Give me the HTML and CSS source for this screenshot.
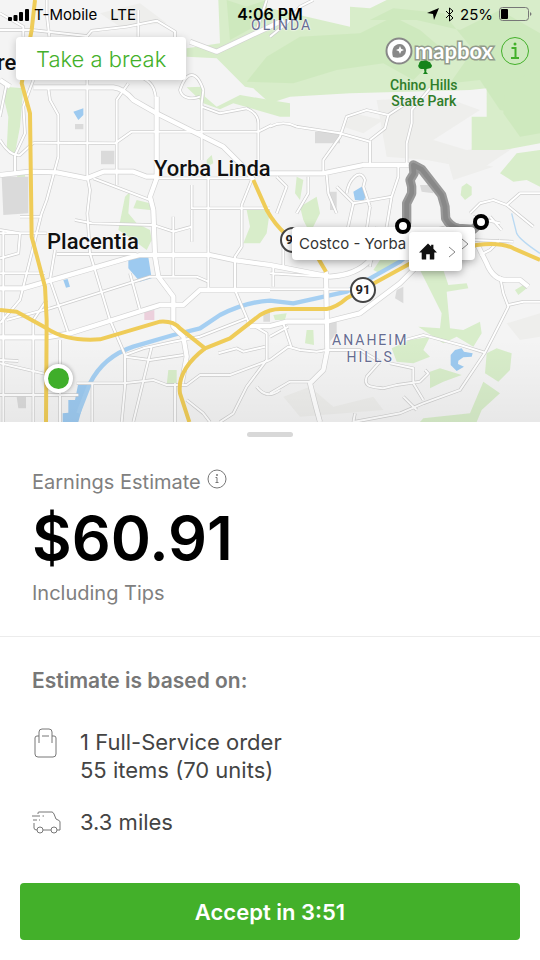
FILE: index.html
```html
<!DOCTYPE html>
<html lang="en">
<head>
  <meta charset="UTF-8">
  <meta name="viewport" content="width=device-width, initial-scale=1.0">
  <title>Earnings Estimate</title>
  <link rel="stylesheet" href="styles.css">
</head>
<body>
  <section class="map">
    <svg class="map-canvas" viewBox="0 0 1620 1266" preserveAspectRatio="xMidYMin slice" aria-hidden="true">
      <defs>
        <linearGradient id="fade" x1="0" y1="0" x2="0" y2="1">
          <stop offset="0" stop-color="#000" stop-opacity="0"/>
          <stop offset="1" stop-color="#000" stop-opacity=".05"/>
        </linearGradient>
        <g id="minor">
          <path d="M0 90H95L260 108M260 110L275 92L380 80L470 62L525 95V120M140 0V40L148 110M415 30V110M0 40L70 80V110"/>
          <path d="M145 265L150 300L175 345V470L140 600L125 640L90 780L60 900L0 970M262 240V530M385 250L350 300V555"/>
          <path d="M430 235C460 250 470 270 470 340M100 428L345 430L395 395H775L815 375"/>
          <path d="M0 420Q30 470 60 465L100 428M45 465V515M100 240L70 320L75 400L45 465M20 250L0 350"/>
          <path d="M605 480V310L610 270C590 210 560 210 540 270C545 295 575 300 600 290M605 320L660 340L740 325Q775 340 775 370V480"/>
          <path d="M280 535L450 600M262 530L270 570L262 640L270 760L330 960L375 1065V1160L365 1266"/>
          <path d="M470 535H760M575 555V625H810M625 530V865M755 540L725 615V740L705 770V870L745 965"/>
          <path d="M225 660L275 670L460 675L520 695L575 680V725M575 630V680M520 650V830"/>
          <path d="M170 762H410M165 750L150 840L205 1000M20 960L150 925L450 830H590L625 845M390 820L420 930"/>
          <path d="M375 1065L430 1045L520 1025L600 1010L740 955M455 1040L400 1266M375 1070L450 1080L550 1065"/>
          <path d="M230 1150H370L460 1140L500 1155H560L600 1125L690 1125L810 1080"/>
          <path d="M0 1090L150 1125M0 1080L55 1083M0 1185H235M277 1150V1266M525 1150V1266M180 1020V1100M180 1170V1266"/>
          <path d="M10 690V1266M0 820H135M0 690L60 700L55 760L0 775M60 650H120M0 700H140"/>
          <path d="M140 900L100 960V1266M655 1060L710 1045L730 1055L795 1040M740 965L800 1000V1080L740 1160L700 1240L660 1266"/>
          <path d="M770 1160Q800 1200 840 1170M560 1200L610 1240L630 1266M800 0L770 90"/>
          <path d="M810 380Q850 360 890 380L1020 400L1110 425V495M970 525V480L1020 410L1040 350L1100 330L1165 345L1155 385L1110 420"/>
          <path d="M1290 265L1235 330V370L1220 430V495M1165 345L1250 290"/>
          <path d="M830 640L860 560L830 530M890 640L925 580V530M980 525L985 580L1010 640M1040 580C1045 540 1080 500 1095 540L1090 560L1110 620"/>
          <path d="M1195 500V530L1175 590L1060 610L1040 700L1000 740M1010 560L1060 610M1175 590L1160 680L1110 790M1110 620L1100 690"/>
          <path d="M810 868H1050M810 820L975 830M820 800V860M850 720V800M1130 680L1110 800M1010 690L1040 740"/>
          <path d="M850 970L875 1045M810 1010L865 980M810 1080L865 1040L900 1050L950 1055L980 1050L1080 1050L1140 1085"/>
          <path d="M810 1180L870 1145H940M1215 1020L1270 1005L1380 1035L1455 1058M1140 1085L1100 1130C1090 1160 1110 1160 1150 1165L1190 1155L1260 1145L1285 1120L1275 1110M1170 1090L1240 1105V1150L1270 1200"/>
          <path d="M1210 1190L1250 1230M1500 830L1510 880L1525 920L1500 970L1455 1058L1380 1170L1270 1210L1200 1240L1060 1266M1060 1266L1065 1240"/>
          <path d="M1525 915L1570 905L1620 905M1410 640L1440 610L1480 600L1520 615L1560 580H1620M1420 650L1500 670M1470 650L1505 690M1520 615L1600 680"/>
          <path d="M1420 720L1540 725M1300 690L1370 675M1500 720L1470 750L1440 765"/>
          <path d="M810 110L860 70L900 20L940 0"/>
        </g>
        <g id="major">
          <path d="M0 240L30 260M100 262H340Q370 265 400 300L470 340L670 440L730 500L760 540"/>
          <path d="M0 525L90 515L170 517L260 535L310 515H400L440 530H470V290M470 535L450 590L460 630L465 770L475 830L520 890V980L550 1010L560 1070L545 1150"/>
          <path d="M0 865H70L380 775L420 765H630L700 780L810 795L990 830Q1070 825 1110 780L1130 720"/>
          <path d="M0 1012H140L210 1000L480 915H550L600 870H810M750 978H810L860 965L980 965L1080 940L1200 850L1260 790"/>
          <path d="M978 815L982 1050L970 1110L930 1150L945 1210L960 1266M1430 730L1460 790Q1480 840 1520 840H1560L1585 860"/>
          <path d="M760 520H970L1090 495H1240"/>
          <path d="M570 125L650 155L810 80L850 60"/>
        </g>
      </defs>

      <!-- hills -->
      <g class="hill">
        <path d="M1130 300L1330 290L1440 330L1300 420L1400 450L1560 430L1440 510L1280 480L1160 470Z"/>
        <path d="M300 40L420 10L500 70L360 80ZM1060 340L1150 360L1090 400L1030 380ZM1340 470L1480 500L1360 540Z"/>
        <path d="M850 1190L930 1160L1000 1220L1120 1190L1150 1230L900 1250ZM1520 970L1620 940V1010L1560 1020Z"/>
      </g>

      <!-- parks -->
      <g class="park">
        <path d="M655 0H800V25H810L1050 80V20L1110 25L1160 0H1620V430L1510 450H1415V350H1460V265L1410 270L1050 280L870 290L810 310L760 265L735 260L650 175L560 170V145L660 130Z"/>
        <path d="M560 262L610 260L615 290L650 320L720 285L810 300L870 310V350L840 350L700 310L660 328L610 310Z"/>
        <path d="M15 260L70 265L60 380L45 460L20 450L25 350L15 310ZM50 525L75 520L78 590L62 560ZM620 480L635 465L640 490L620 500Z"/>
        <path d="M375 590L390 575L385 640L410 670L450 690L455 720L440 750L400 720L355 690ZM410 600L450 610V630L400 625Z"/>
        <path d="M740 630H810L800 700L780 730H730L750 680ZM900 620L950 590L960 640L930 700L910 660ZM890 530L910 540L900 600L885 580Z"/>
        <path d="M505 1110L530 1110V1155H500ZM820 945L860 940L855 960L825 960ZM920 990L940 990L942 1035L915 1030Z"/>
        <path d="M1260 810H1330L1345 855L1400 850L1405 865L1340 875L1350 985L1390 990L1440 965L1445 1000L1420 1040L1370 1010L1330 1030L1255 980L1320 985L1325 940L1280 850Z"/>
        <path d="M1175 1045L1230 1020L1290 1010L1270 1050L1290 1070L1240 1090L1190 1085ZM1290 1115L1320 1105L1385 1125L1330 1145L1290 1165Z"/>
        <path d="M1460 1060L1490 1045L1535 1060L1530 1110L1495 1145L1455 1120ZM1450 1145L1500 1180L1445 1230L1430 1266H1260L1270 1255L1410 1240Z"/>
        <path d="M1500 520L1550 460L1620 450V560L1580 540L1540 545ZM1385 560L1400 550L1415 560V585L1395 600L1382 585ZM1545 870L1570 855L1580 865L1555 885ZM1140 780L1200 780L1140 820L1120 810Z"/>
      </g>
      <g class="park-shade">
        <path d="M800 170L900 110L1080 100L1180 50L1260 90L1330 150L1240 240L1150 190L1010 210L880 250L740 245Z"/>
        <path d="M1110 60L1180 25L1330 40L1420 150L1350 250L1440 240L1500 330L1620 350V100L1500 30L1380 90L1250 60Z"/>
        <path d="M680 0L740 20L800 0V60L690 120ZM1515 250L1620 210V400L1560 410L1510 340Z"/>
      </g>

      <!-- blocks -->
      <path class="block" d="M5 530H85V640L10 645ZM303 452H343V493H303ZM225 372H250V388H225ZM50 1190H78V1225H55ZM945 395H1020V430H945ZM990 575H1010V630H990ZM980 965H1010V1000L985 1030ZM1190 870L1210 860V910L1185 895ZM790 940L810 930V965H790ZM1260 555H1300V580L1265 575Z"/>
      <path class="clinic" d="M433 935L463 930V960H433Z"/>

      <!-- water -->
      <g class="water">
        <path d="M385 770L445 772L455 835L420 845L385 805ZM190 840L203 837L210 860L198 863ZM220 335L250 325V345L235 360ZM235 1150L265 1155L235 1266H188V1240L205 1238V1200H225Z"/>
        <path d="M1060 575L1085 560L1100 575L1092 602L1065 600ZM1352 1065L1365 1050L1385 1045L1392 1055L1418 1060L1415 1070L1390 1072L1375 1082L1374 1092L1392 1100L1370 1113L1352 1095Z"/>
      </g>
      <path class="river" d="M235 1240L270 1150Q310 1070 400 1040L520 1005L600 985L660 945Q740 905 810 902L880 910L1040 875L1200 785L1240 750"/>
      <path class="creek" d="M1620 760Q1560 720 1550 700L1535 640"/>

      <use href="#minor" class="minor-case"/>
      <use href="#major" class="major-case"/>
      <use href="#minor" class="minor-fill"/>
      <use href="#major" class="major-fill"/>

      <g class="highway">
        <path d="M105 0L95 90L65 250L90 340L95 710L135 860L140 960L138 1266"/>
        <path d="M0 930L50 935L140 985Q200 1025 300 1018L480 965Q520 962 540 985L615 1045L690 1015L780 945Q810 927 840 927H980Q1010 922 1040 895L1240 785L1430 735Q1500 725 1540 745L1620 780"/>
        <path d="M615 1045Q530 1110 540 1180L568 1266M760 540L800 630Q850 720 940 750L978 815"/>
      </g>

      <!-- delivery route -->
      <path class="route" d="M1220 670V610L1235 580V560L1230 540L1242 520L1240 495L1265 508L1325 585L1335 620L1337 655Q1350 680 1375 685L1420 688L1440 670"/>
      <path class="route-line" d="M1220 670V610L1235 580V560L1230 540L1242 520L1240 495L1265 508L1325 585L1335 620L1337 655Q1350 680 1375 685L1420 688L1440 670"/>

      <rect y="1020" width="1620" height="246" fill="url(#fade)"/>
    </svg>

    <span class="label city yorba">Yorba Linda</span>
    <span class="label city placentia">Placentia</span>
    <span class="label city fullerton">re</span>
    <span class="label district olinda">OLINDA</span>
    <span class="label district anaheim">ANAHEIM<br>HILLS</span>
    <span class="label park-name">Chino Hills<br>State Park</span>
    <svg class="tree" viewBox="0 0 14 14" aria-hidden="true">
      <path d="M3 9A3 3 0 0 1 1 4A3 3 0 0 1 5 1A3 3 0 0 1 10 1.500A3 3 0 0 1 13 4A3 2.600 0 0 1 11 8.500L8.500 9L8.200 12L10 14H5L6.500 12L6 9Z"/>
    </svg>
    <span class="shield shield-90">90</span>
    <span class="shield shield-91">91</span>

    <span class="location"></span>
    <button class="callout store" type="button">
      <span>Costco - Yorba</span>
      <svg class="chevron" viewBox="0 0 6 12" aria-hidden="true"><path d="M0 1L6 6L0 11"/></svg>
    </button>
    <button class="callout home" type="button" aria-label="Home">
      <svg class="house" viewBox="0 0 20 18" aria-hidden="true"><path d="M10 0L13.500 3.400V1.500H16V6L20 10H17V17Q17 18 16 18H12V12H8V18H4Q3 18 3 17V10H0Z"/></svg>
      <svg class="chevron" viewBox="0 0 6 12" aria-hidden="true"><path d="M0 1L6 6L0 11"/></svg>
    </button>
    <span class="stop stop-store"></span>
    <span class="stop stop-home"></span>

    <header class="status-bar">
      <div class="carrier">
        <svg class="signal" viewBox="0 0 21 13" aria-hidden="true">
          <rect y="9" width="4" height="4" rx="1"/><rect x="5.500" y="7" width="4" height="6" rx="1"/><rect x="11" y="4" width="4" height="9" rx="1"/><rect x="17" y="1" width="4" height="12" rx="1"/>
        </svg>
        <span>T-Mobile</span>
        <span class="network">LTE</span>
      </div>
      <div class="clock">4:06 PM</div>
      <div class="power">
        <svg class="arrow" viewBox="0 0 12 12" aria-hidden="true"><path d="M12 0L7 12L6 6L0 5Z"/></svg>
        <svg class="bluetooth" viewBox="0 0 9 15" aria-hidden="true"><path d="M1 4L8 11L4.500 14V1L8 4L1 11"/></svg>
        <span>25%</span>
        <svg class="battery" viewBox="0 0 33 14" aria-hidden="true">
          <rect class="battery-shell" x=".5" y=".5" width="29" height="13" rx="3"/><rect x="2" y="2" width="7" height="10" rx="1"/><path class="battery-tip" d="M31 5Q34 7 31 9Z"/>
        </svg>
      </div>
    </header>

    <div class="map-controls">
      <button class="break-btn" type="button">Take a break</button>
      <div class="attribution">
        <svg class="mapbox-mark" viewBox="0 0 28 28" aria-hidden="true">
          <circle cx="14" cy="14" r="12.500"/>
          <path d="M8 20C6 14 8 7 15 7A6.500 6.500 0 0 1 21 13C21 20 14 22 8 20Z"/>
          <path class="spark" d="M15 9L16.200 11.800L19 13L16.200 14.200L15 17L13.800 14.200L11 13L13.800 11.800Z"/>
        </svg>
        <span class="mapbox-name">mapbox</span>
        <button class="info-btn" type="button" aria-label="Map information">
          <svg viewBox="0 0 30 30" aria-hidden="true"><circle class="ring" cx="15" cy="15" r="13.500"/><path d="M11.500 12H15.500V22M11 22H19"/><circle class="dot" cx="15" cy="8" r="1.500"/></svg>
        </button>
      </div>
    </div>
  </section>

  <main class="sheet">
    <div class="handle"></div>
    <section class="earnings">
      <div class="earnings-title">
        <span>Earnings Estimate</span>
        <button class="hint-btn" type="button" aria-label="About this estimate">
          <svg viewBox="0 0 20 20" aria-hidden="true"><circle cx="10" cy="10" r="9"/><path d="M8.500 8.500H10V13.500M8.500 13.500H11.500"/><circle class="dot" cx="10" cy="6" r="1"/></svg>
        </button>
      </div>
      <div class="amount">$60.91</div>
      <div class="tips">Including Tips</div>
    </section>

    <section class="basis">
      <h2>Estimate is based on:</h2>
      <ul>
        <li>
          <svg class="icon" viewBox="0 0 28 30" aria-hidden="true"><path d="M7 8H5Q3 8 3 10V26Q3 29 6 29H21Q24 29 24 26V10Q24 8 22 8H20M7 15V4Q7 1 10 1H17Q20 1 20 4V15M10 8H17"/></svg>
          <span>1 Full-Service order<br>55 items (70 units)</span>
        </li>
        <li>
          <svg class="icon" viewBox="0 0 28 30" aria-hidden="true"><path d="M0 8H8M10.500 8H12M1 12H5M7 12H8M6 6V5Q6 4 7 4H20Q21 4 22 6L24 11L27 12.500Q28 13 28 14V22H25M19 22H11M5 22Q2 22 2 20V15"/><circle cx="8" cy="22" r="3"/><circle cx="22" cy="22" r="3"/></svg>
          <span>3.3 miles</span>
        </li>
      </ul>
    </section>

    <button class="accept-btn" type="button">Accept in 3:51</button>
  </main>
</body>
</html>
```
FILE: styles.css
```css
* { box-sizing: border-box; }
body { margin: 0; min-height: 100vh; display: flex; flex-direction: column; background: #fff; color: #444; font-family: Inter, "Liberation Sans", sans-serif; }
button { margin: 0; padding: 0; border: none; background: none; font-family: inherit; color: inherit; cursor: pointer; }
svg { display: block; overflow: visible; flex: none; }

/* map */
.map { position: relative; height: 422px; overflow: hidden; background: #f4f4f4; }
.map-canvas { position: absolute; left: 0; top: 0; width: 100%; height: 100%; fill: none; stroke-linejoin: round; overflow: hidden; }
.hill { fill: #eeeeec; }
.park { fill: #d8edca; }
.park-shade { fill: #c9e7b7; opacity: 0.6; }
.block { fill: #dadada; }
.clinic { fill: #ecd0dc; }
.water { fill: #9dcaf0; }
.river { stroke: #a5cff2; stroke-width: 13; }
.creek { stroke: #b9d9f3; stroke-width: 4; }
.minor-case { stroke: #cdcdcd; stroke-width: 10; }
.minor-fill { stroke: #fff; stroke-width: 6; }
.major-case { stroke: #d2d2d2; stroke-width: 17; }
.major-fill { stroke: #fff; stroke-width: 13; }
.highway { stroke: #efcc58; stroke-width: 12; }
.route { stroke: #999; stroke-width: 28; stroke-linecap: round; }
.route-line { stroke: #888; stroke-width: 14; stroke-linecap: round; }

.label { position: absolute; color: #111; font-family: Roboto, "Liberation Sans", sans-serif; white-space: nowrap; text-shadow: 0 0 2px #fff, 0 0 2px #fff; }
.city { font-size: 22px; line-height: 28px; font-weight: 500; }
.yorba { left: 154px; top: 155px; }
.placentia { left: 47px; top: 228px; }
.fullerton { left: -3px; top: 49px; }
.district { color: #666c91; font-size: 14px; line-height: 17px; letter-spacing: 2px; text-align: center; }
.olinda { left: 251px; top: 17px; }
.anaheim { left: 332px; top: 332px; }
.park-name { left: 390px; top: 77px; color: #2f7d2a; font-size: 14px; line-height: 16px; font-weight: 500; text-align: center; text-shadow: none; }
.tree { position: absolute; left: 418px; top: 60px; width: 14px; height: 14px; fill: #16841b; }
.shield { position: absolute; width: 26px; height: 26px; border: 2px solid #444; border-radius: 50%; background: #fff; color: #222; font: 700 13px/22px Roboto, sans-serif; text-align: center; }
.shield-90 { left: 280px; top: 227px; }
.shield-91 { left: 350px; top: 277px; }
.location { position: absolute; left: 44px; top: 364px; width: 29px; height: 29px; border: 4px solid #fff; border-radius: 50%; background: #3fae2a; box-shadow: 0 0 4px rgba(0,0,0,0.35); }
.stop { position: absolute; width: 16px; height: 16px; border: 4px solid #000; border-radius: 50%; background: #fff; }
.stop-store { left: 395px; top: 218px; }
.stop-home { left: 473px; top: 214px; }
.callout { position: absolute; display: flex; align-items: center; justify-content: space-between; background: #fff; border-radius: 4px; box-shadow: 0 2px 8px rgba(0,0,0,0.35); font-size: 15px; color: #333; }
.store { left: 292px; top: 227px; width: 183px; height: 33px; padding: 0 7px; }
.home { left: 409px; top: 232px; width: 53px; height: 39px; padding: 0 7px 0 10px; }
.house { width: 18px; height: 17px; fill: #111; }
.chevron { width: 6px; height: 12px; fill: none; stroke: #888; }

.status-bar { position: relative; display: grid; grid-template-columns: 1fr auto 1fr; align-items: center; height: 28px; padding: 0 8px; font-size: 15px; color: #000; }
.carrier, .power { display: flex; align-items: center; gap: 5px; }
.network { margin-left: 8px; }
.power { justify-content: flex-end; gap: 6px; }
.signal { width: 21px; height: 13px; }
.clock { font-size: 16px; font-weight: 600; }
.arrow { width: 12px; height: 12px; }
.bluetooth { width: 9px; height: 15px; fill: none; stroke: #000; }
.battery { width: 33px; height: 14px; }
.battery-shell { fill: none; stroke: #777; }
.battery-tip { fill: #777; }

.map-controls { position: relative; display: flex; align-items: flex-start; justify-content: space-between; padding: 9px 10px 0 16px; }
.break-btn { height: 43px; padding: 0 20px; border-radius: 4px; background: #fff; box-shadow: 0 2px 8px rgba(0,0,0,0.2); color: #43b02a; font-size: 22px; font-weight: 300; }
.attribution { display: flex; align-items: center; height: 28px; }
.mapbox-mark { width: 28px; height: 28px; fill: #fff; stroke: #888; stroke-width: 2; }
.mapbox-mark path { fill: #888; stroke: none; }
.mapbox-mark .spark { fill: #fff; }
.mapbox-name { margin: 0 7px 0 2px; color: #fff; font: 700 22px/26px Lato, sans-serif; -webkit-text-stroke: 3px #929b8c; paint-order: stroke fill; }
.info-btn { color: #43b02a; }
.info-btn svg { width: 30px; height: 30px; fill: none; stroke: currentColor; stroke-width: 2; }
.info-btn .ring { stroke-width: 1; }
.info-btn .dot, .hint-btn .dot { fill: currentColor; stroke: none; }

/* bottom sheet */
.sheet { flex: 1; display: flex; flex-direction: column; }
.handle { width: 46px; height: 5px; margin: 10px auto 0; border-radius: 3px; background: #d8d8d8; }
.earnings { padding: 32px 32px 30px; border-bottom: 1px solid #ececec; color: #808080; font-size: 20px; line-height: 26px; }
.earnings-title { display: flex; align-items: flex-start; gap: 6px; }
.hint-btn { color: #777; }
.hint-btn svg { width: 20px; height: 20px; fill: none; stroke: currentColor; }
.amount { margin: 7px 0 6px; color: #000; font-size: 61px; line-height: 72px; font-weight: 600; }
.basis { padding: 31px 32px 0; }
.basis h2 { margin: 0 0 34px; color: #777; font-size: 21px; line-height: 26px; font-weight: 600; }
.basis ul { margin: 0; padding: 0; list-style: none; }
.basis li { display: flex; gap: 20px; margin-bottom: 24px; font-size: 22px; line-height: 28px; }
.icon { width: 28px; height: 30px; fill: none; stroke: #777; }
.accept-btn { margin: auto 20px 20px; height: 57px; border-radius: 4px; background: #43b02a; color: #fff; font-size: 22px; font-weight: 600; }
```
